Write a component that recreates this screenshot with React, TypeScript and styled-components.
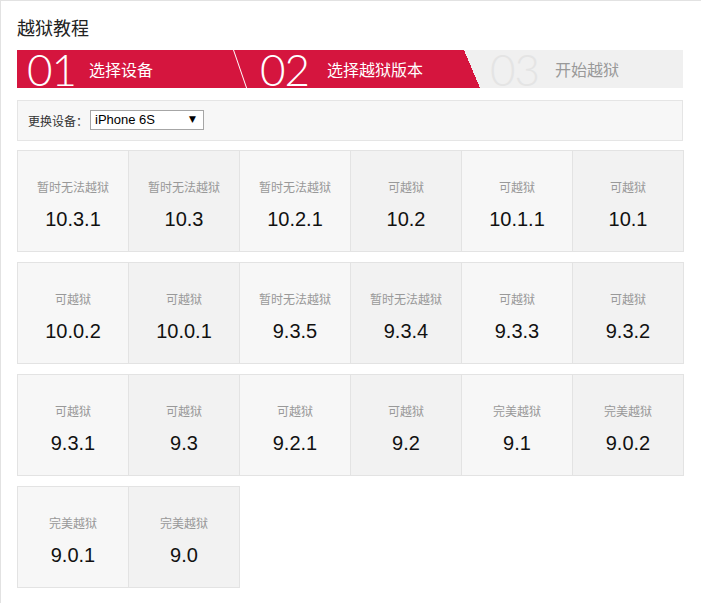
import React from "react";
import styled, { createGlobalStyle } from "styled-components";

const GlobalStyle = createGlobalStyle`
  html, body { margin: 0; padding: 0; background: #fff; }
  body { font-family: "Liberation Sans", "Noto Sans CJK SC", sans-serif; }
  * { box-sizing: border-box; }
`;

const RED = "#d5153e";

const Page = styled.div`
  width: 701px;
  min-height: 603px;
  border-top: 1px solid #e2e2e2;
  border-left: 1px solid #e2e2e2;
  padding: 0 0 16px 16px;
`;

const Title = styled.h1`
  margin: 14px 0 11px;
  height: 24px;
  line-height: 24px;
  font-size: 18px;
  font-weight: normal;
  color: #222;
  font-family: "Noto Sans CJK SC", sans-serif;
`;

const StepBar = styled.div`
  display: flex;
  width: 666px;
  height: 38px;
  background: #f0f0f0;
`;

const Step = styled.div<{ $w?: number; $active?: boolean; $pl: number; $cut?: boolean; $divider?: boolean }>`
  position: relative;
  display: flex;
  align-items: center;
  flex: ${(p) => (p.$w ? `0 0 ${p.$w}px` : "1 1 auto")};
  padding-left: ${(p) => p.$pl}px;
  background: ${(p) =>
    !p.$active
      ? "transparent"
      : p.$cut
      ? `linear-gradient(to top right, ${RED} 50%, transparent 50%) right top / 16px 100% no-repeat,
         linear-gradient(${RED}, ${RED}) left top / calc(100% - 16px) 100% no-repeat`
      : RED};
  ${(p) =>
    p.$divider
      ? `&::before {
    content: "";
    position: absolute;
    left: -1px;
    top: 0;
    width: 1px;
    height: 100%;
    background: #fff;
    transform-origin: top left;
    transform: skewX(19deg);
  }`
      : ""}
`;

const StepNum = styled.span<{ $active?: boolean }>`
  font-family: Lato, "Open Sans", sans-serif;
  font-weight: 300;
  font-size: 44px;
  line-height: 38px;
  letter-spacing: -1px;
  color: ${(p) => (p.$active ? "#fff" : "#e4e4e4")};
  margin-top: -1px;
`;

const StepLabel = styled.span<{ $active?: boolean; $gap: number }>`
  margin-left: ${(p) => p.$gap}px;
  font-family: "Noto Sans CJK SC", sans-serif;
  font-size: 16px;
  color: ${(p) => (p.$active ? "#fff" : "#999")};
`;

const DeviceBar = styled.div`
  display: flex;
  align-items: center;
  width: 666px;
  height: 41px;
  margin-top: 12px;
  padding-left: 10px;
  background: #f7f7f7;
  border: 1px solid #e5e5e5;
`;

const DeviceLabel = styled.span`
  font-family: "Noto Sans CJK SC", sans-serif;
  font-size: 12px;
  color: #333;
`;

const SelectWrap = styled.div`
  position: relative;
  margin-left: 2px;
  margin-top: -2px;
`;

const Select = styled.select`
  appearance: none;
  -webkit-appearance: none;
  display: block;
  width: 114px;
  height: 20px;
  padding: 0 0 0 4px;
  border: 1px solid #a6a6a6;
  border-radius: 0;
  background: #fff;
  font-family: "Liberation Sans", sans-serif;
  font-size: 13px;
  color: #000;
  outline: none;
`;

const Arrow = styled.span`
  position: absolute;
  right: 8px;
  top: 4px;
  font-size: 9px;
  line-height: 10px;
  color: #000;
  pointer-events: none;
  font-family: "DejaVu Sans", sans-serif;
`;

const Grid = styled.div`
  display: flex;
  flex-direction: column;
  gap: 10px;
  margin-top: 9px;
`;

const Row = styled.div`
  display: flex;
`;

const Cell = styled.div<{ $alt: boolean }>`
  display: flex;
  flex-direction: column;
  align-items: center;
  width: 112px;
  height: 102px;
  padding-top: 27px;
  background: ${(p) => (p.$alt ? "#f2f2f2" : "#f7f7f7")};
  border: 1px solid #e3e3e3;
  & + & {
    margin-left: -1px;
  }
`;

const Status = styled.span`
  font-family: "Noto Sans CJK SC", sans-serif;
  font-size: 12px;
  line-height: 18px;
  color: #999;
`;

const Version = styled.span`
  margin-top: 11px;
  font-family: "Liberation Sans", sans-serif;
  font-size: 20px;
  line-height: 24px;
  color: #111;
`;

const A = "暂时无法越狱";
const B = "可越狱";
const C = "完美越狱";

const data: [string, string][] = [
  [A, "10.3.1"], [A, "10.3"], [A, "10.2.1"], [B, "10.2"], [B, "10.1.1"], [B, "10.1"],
  [B, "10.0.2"], [B, "10.0.1"], [A, "9.3.5"], [A, "9.3.4"], [B, "9.3.3"], [B, "9.3.2"],
  [B, "9.3.1"], [B, "9.3"], [B, "9.2.1"], [B, "9.2"], [C, "9.1"], [C, "9.0.2"],
  [C, "9.0.1"], [C, "9.0"],
];

const rows: [string, string][][] = [];
for (let i = 0; i < data.length; i += 6) rows.push(data.slice(i, i + 6));

export default function App() {
  return (
    <>
      <GlobalStyle />
      <Page>
        <Title>越狱教程</Title>
        <StepBar>
          <Step $w={217} $active $pl={10}>
            <StepNum $active>01</StepNum>
            <StepLabel $active $gap={13}>选择设备</StepLabel>
          </Step>
          <Step $w={246} $active $pl={26} $cut $divider>
            <StepNum $active>02</StepNum>
            <StepLabel $active $gap={18}>选择越狱版本</StepLabel>
          </Step>
          <Step $pl={10}>
            <StepNum>03</StepNum>
            <StepLabel $gap={16}>开始越狱</StepLabel>
          </Step>
        </StepBar>
        <DeviceBar>
          <DeviceLabel>更换设备：</DeviceLabel>
          <SelectWrap>
            <Select defaultValue="iPhone 6S">
              <option>iPhone 6S</option>
              <option>iPhone 6S Plus</option>
              <option>iPhone 6</option>
            </Select>
            <Arrow>▼</Arrow>
          </SelectWrap>
        </DeviceBar>
        <Grid>
          {rows.map((r, ri) => (
            <Row key={ri}>
              {r.map(([s, v], ci) => (
                <Cell key={v} $alt={ci % 2 === 1}>
                  <Status>{s}</Status>
                  <Version>{v}</Version>
                </Cell>
              ))}
            </Row>
          ))}
        </Grid>
      </Page>
    </>
  );
}
